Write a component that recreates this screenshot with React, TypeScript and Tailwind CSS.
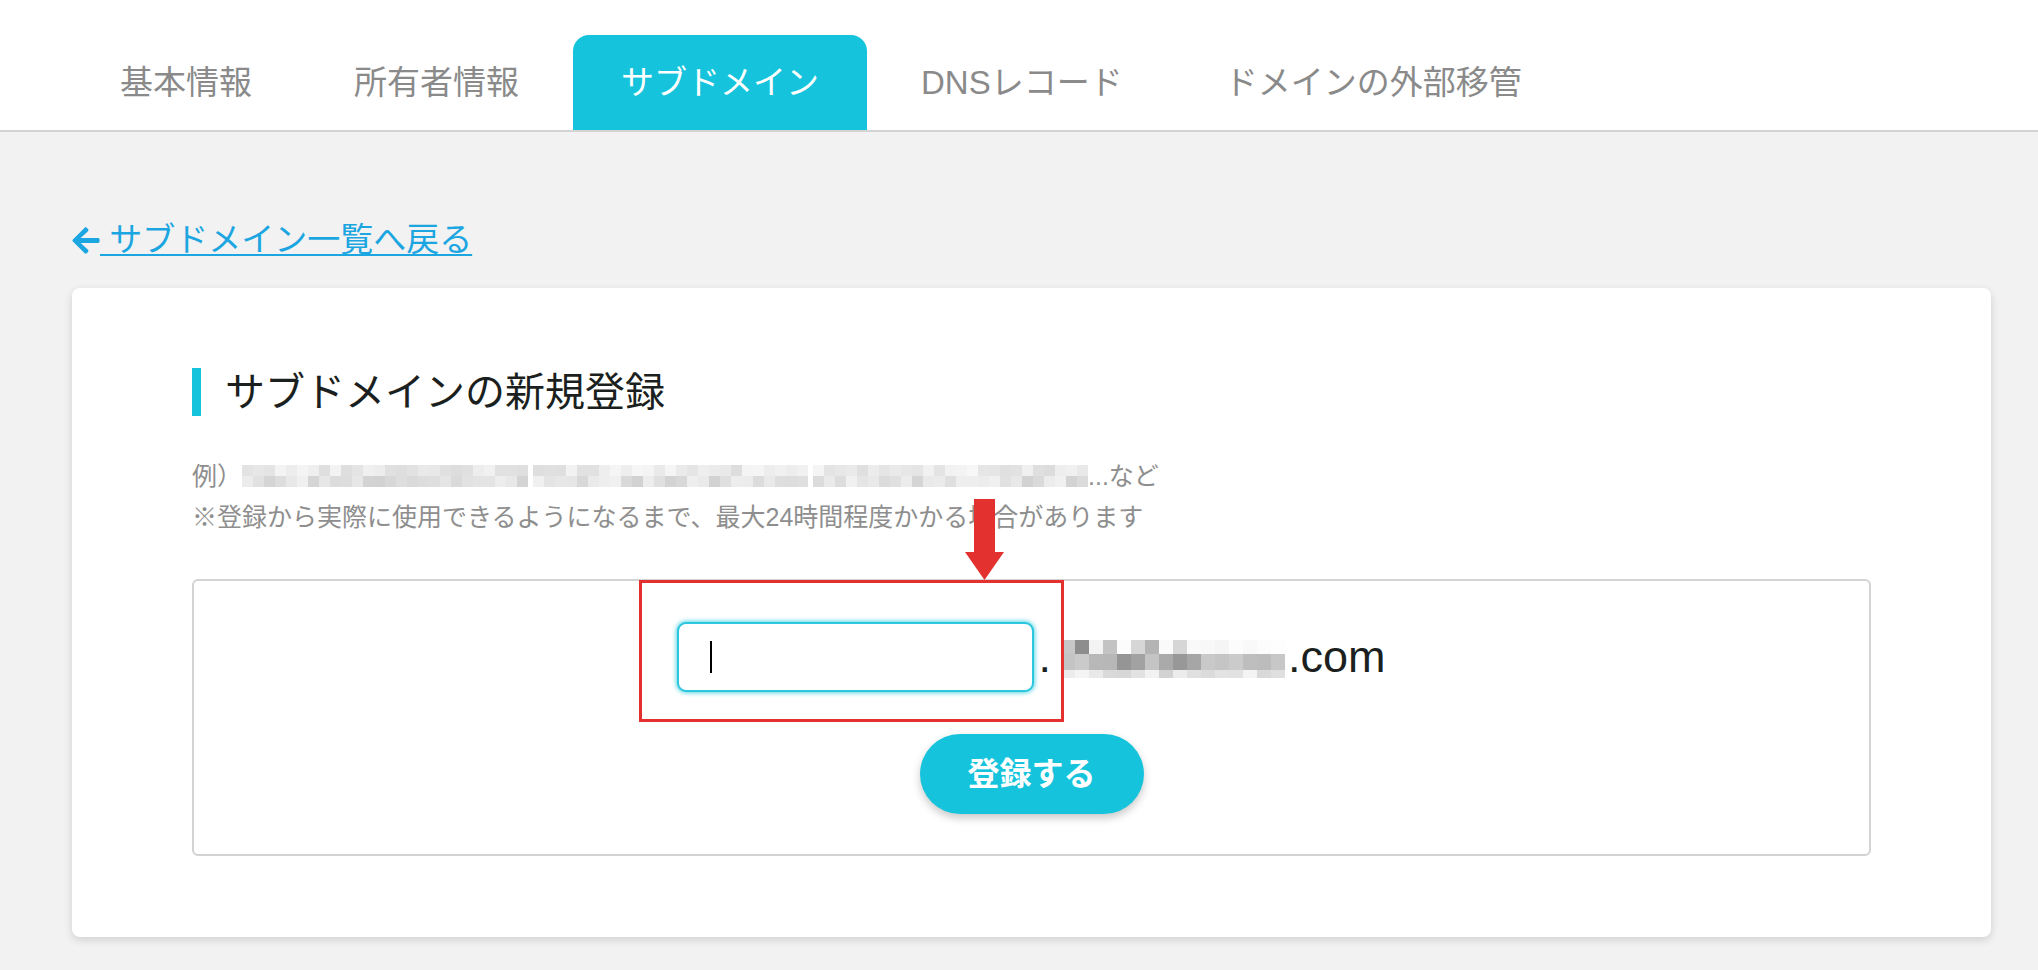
import React from "react";
import { FaArrowLeft } from "react-icons/fa";

const tabs = ["基本情報", "所有者情報", "サブドメイン", "DNSレコード", "ドメインの外部移管"];

// deterministic noise for the pixelated (masked) parts
const noise = (i: number, seed: number) => {
  const v = Math.sin(i * 12.9898 + seed * 78.233) * 43758.5453;
  return v - Math.floor(v);
};

const gray = (level: number) => {
  const l = Math.max(0, Math.min(255, Math.round(level)));
  return `rgb(${l},${l},${l})`;
};

const Mosaic = ({
  cols,
  cell,
  rows,
  seed,
}: {
  cols: number;
  cell: number;
  rows: { h: number; min: number; max: number; sparse?: boolean }[];
  seed: number;
}) => (
  <div className="flex flex-col">
    {rows.map((row, r) => (
      <div key={r} className="flex">
        {Array.from({ length: cols }).map((_, c) => {
          const n = noise(c + r * 31, seed);
          let level = row.min + (row.max - row.min) * n;
          if (row.sparse && noise(c * 3 + 7, seed + 1) > 0.45) level = 240 + 15 * n;
          return (
            <div
              key={c}
              style={{ width: cell, height: row.h, backgroundColor: gray(level) }}
            />
          );
        })}
      </div>
    ))}
  </div>
);

const lightRows = [
  { h: 11, min: 220, max: 247 },
  { h: 11, min: 208, max: 242 },
];

const App = () => {
  return (
    <div className="min-h-screen bg-[#f2f2f2] font-['Liberation_Sans','Noto_Sans_CJK_JP',sans-serif]">
      {/* Tabs */}
      <header className="h-[132px] bg-white border-b-2 border-[#d4d4d4]">
        <nav className="h-full flex items-end pl-[72px] gap-[6px]">
          {tabs.map((t) => (
            <div
              key={t}
              className={
                t === "サブドメイン"
                  ? "h-[95px] px-[48px] flex items-center text-[33px] leading-none rounded-t-[16px] bg-[#15c4dc] text-white"
                  : "h-[95px] px-[48px] flex items-center text-[33px] leading-none text-[#8a8a8a]"
              }
            >
              {t}
            </div>
          ))}
        </nav>
      </header>

      {/* Back link */}
      <div className="pl-[72px] mt-[88px]">
        <a className="inline-flex items-center text-[33px] leading-[40px] text-[#1ca6e1]">
          <FaArrowLeft className="w-[28px] h-[31px]" />
          <span className="underline decoration-2 underline-offset-[3px]">
            &nbsp;サブドメイン一覧へ戻る
          </span>
        </a>
      </div>

      {/* Card */}
      <section className="mt-[25px] ml-[72px] w-[1919px] bg-white rounded-[8px] shadow-[0_3px_8px_rgba(0,0,0,0.14)] pt-[80px] px-[120px] pb-[81px]">
        <div className="flex items-center gap-[24px]">
          <span className="w-[9px] h-[48px] bg-[#15c4dc]" />
          <h2 className="text-[40px] leading-[48px] text-[#1b1f20]">
            サブドメインの新規登録
          </h2>
        </div>

        <div className="mt-[40px] text-[25px] leading-[41px] text-[#8e8e8e]">
          <div className="flex items-center">
            <span>例）</span>
            <div className="flex gap-[5px]">
              <Mosaic cols={26} cell={11} seed={3} rows={lightRows} />
              <Mosaic cols={25} cell={11} seed={5} rows={lightRows} />
              <Mosaic cols={25} cell={11} seed={9} rows={lightRows} />
            </div>
            <span>...など</span>
          </div>
          <p>※登録から実際に使用できるようになるまで、最大24時間程度かかる場合があります</p>
        </div>

        <div className="mt-[41px] border-2 border-[#d3d3d3] rounded-[6px] pt-[41px] pb-[40px] flex flex-col items-center">
          <div className="flex items-center">
            <div className="relative">
              <div className="w-[357px] h-[70px] rounded-[9px] border-2 border-[#2cc6dd] shadow-[0_0_4px_1px_rgba(21,196,220,0.7)] bg-white flex items-center pl-[31px]">
                <span className="w-[2px] h-[32px] bg-black" />
              </div>
              {/* annotation */}
              <div className="absolute -left-[38px] -top-[42px] w-[425px] h-[142px] border-[3px] border-[#e3312f]" />
              <svg
                className="absolute left-[288px] -top-[123px]"
                width="39"
                height="81"
                viewBox="0 0 39 81"
              >
                <rect x="9" y="0" width="21" height="54" fill="#e3312f" />
                <polygon points="0,53 39,53 19.5,81" fill="#e3312f" />
              </svg>
            </div>
            <div className="flex items-center text-[45px] leading-none text-[#1b1f20] ml-[4px]">
              <span>.</span>
              <div className="ml-[10px] mr-[3px] mt-[4px]">
                <Mosaic
                  cols={16}
                  cell={14}
                  seed={11}
                  rows={[
                    { h: 14, min: 140, max: 215, sparse: true },
                    { h: 16, min: 130, max: 205 },
                    { h: 8, min: 210, max: 245 },
                  ]}
                />
              </div>
              <span>.com</span>
            </div>
          </div>

          <button className="mt-[42px] w-[224px] h-[80px] rounded-full bg-[#15c4dc] text-white text-[32px] font-bold shadow-[0_4px_8px_rgba(0,0,0,0.22)]">
            登録する
          </button>
        </div>
      </section>
    </div>
  );
};

export default App;
